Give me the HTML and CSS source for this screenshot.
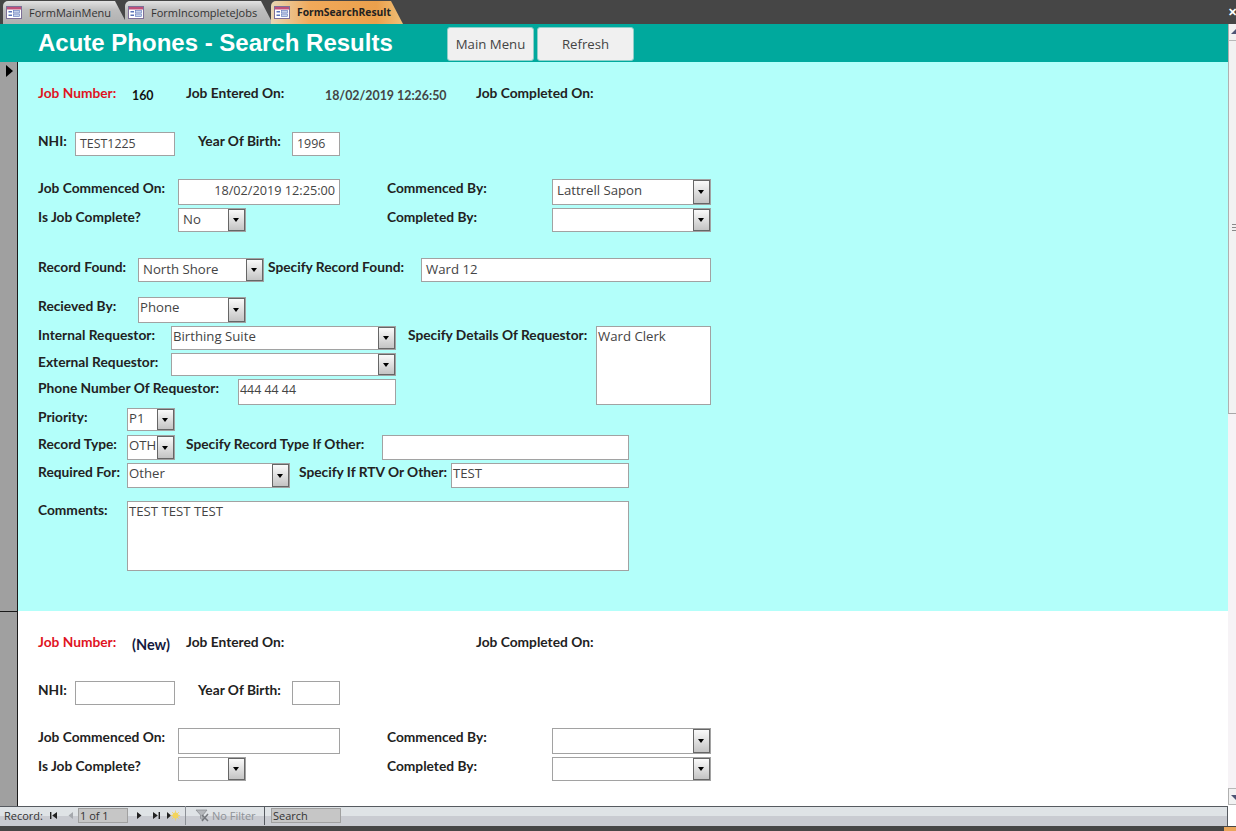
FILE: index.html
```html
<!DOCTYPE html>
<html lang="en">
<head>
    <meta charset="UTF-8">
    <title>Acute Phones - Search Results</title>
    <link rel="stylesheet" href="styles.css">
</head>
<body>

<svg class="defs" width="0" height="0">
    <symbol id="form-icon" viewBox="0 0 16 13">
        <rect x="0.5" y="0.5" width="15" height="12" fill="#fff" stroke="#7d6f98"/>
        <rect x="1" y="1" width="14" height="2.5" fill="#c0507a"/>
        <rect x="2.5" y="5" width="3.5" height="1.5" fill="#5a74b8"/>
        <rect x="2.5" y="8.5" width="3.5" height="1.5" fill="#5a74b8"/>
        <rect x="7.5" y="4.5" width="6" height="2.5" fill="#c6d2ea" stroke="#5a74b8" stroke-width="0.6"/>
        <rect x="7.5" y="8" width="6" height="2.5" fill="#c6d2ea" stroke="#5a74b8" stroke-width="0.6"/>
    </symbol>
</svg>

<nav class="tabs">
    <div class="tab tab-main"><svg class="tab-icon"><use href="#form-icon"/></svg>FormMainMenu</div>
    <div class="tab tab-jobs"><svg class="tab-icon"><use href="#form-icon"/></svg>FormIncompleteJobs</div>
    <div class="tab tab-search active"><svg class="tab-icon"><use href="#form-icon"/></svg>FormSearchResult</div>
    <div class="close">&#10005;</div>
</nav>

<div class="window">
    <div class="form">
        <header class="form-header">
            <h1>Acute Phones - Search Results</h1>
            <button class="btn btn-menu">Main Menu</button>
            <button class="btn btn-refresh">Refresh</button>
        </header>

        <div class="detail">
            <div class="selector">
                <div class="sel-cell sel-current"><span class="pointer"></span></div>
                <div class="sel-cell"></div>
            </div>
            <div class="records">

                <section class="record current">
                    <div class="row top-row">
                        <label class="lb w94 red">Job Number:</label>
                        <span class="val w54">160</span>
                        <label class="lb w139">Job Entered On:</label>
                        <span class="val date w151">18/02/2019 12:26:50</span>
                        <label class="lb">Job Completed On:</label>
                    </div>
                    <div class="row mt30">
                        <label class="lb w37">NHI:</label>
                        <div class="field num w100 h24">TEST1225</div>
                        <label class="lb w94 ml23">Year Of Birth:</label>
                        <div class="field num w48 h24">1996</div>
                    </div>
                    <div class="row mt23">
                        <label class="lb w140">Job Commenced On:</label>
                        <div class="field w162 h26 right">18/02/2019 12:25:00</div>
                        <label class="lb w165 ml47">Commenced By:</label>
                        <div class="combo w159 h26">Lattrell Sapon<span class="drop"></span></div>
                    </div>
                    <div class="row mt3">
                        <label class="lb w140">Is Job Complete?</label>
                        <div class="combo w68 h24">No<span class="drop"></span></div>
                        <label class="lb w165 ml141">Completed By:</label>
                        <div class="combo w159 h24"><span class="drop"></span></div>
                    </div>
                    <div class="row mt26">
                        <label class="lb w100">Record Found:</label>
                        <div class="combo w126 h24">North Shore<span class="drop"></span></div>
                        <label class="lb w153 ml4">Specify Record Found:</label>
                        <div class="field w290 h24">Ward 12</div>
                    </div>
                    <div class="row mt15">
                        <label class="lb w100">Recieved By:</label>
                        <div class="combo tight w108 h26">Phone<span class="drop"></span></div>
                    </div>

                    <div class="requestor mt3">
                        <div class="req-left">
                            <div class="row">
                                <label class="lb w133">Internal Requestor:</label>
                                <div class="combo tight w225 h24">Birthing Suite<span class="drop"></span></div>
                            </div>
                            <div class="row mt3">
                                <label class="lb w133">External Requestor:</label>
                                <div class="combo tight w225 h23"><span class="drop"></span></div>
                            </div>
                            <div class="row mt3">
                                <label class="lb w200">Phone Number Of Requestor:</label>
                                <div class="field tight num w158 h26">444 44 44</div>
                            </div>
                        </div>
                        <label class="lb w188 ml12">Specify Details Of Requestor:</label>
                        <div class="field tight w115 h79">Ward Clerk</div>
                    </div>

                    <div class="row mt3">
                        <label class="lb w89">Priority:</label>
                        <div class="combo tight w48 h23">P1<span class="drop"></span></div>
                    </div>
                    <div class="row mt4">
                        <label class="lb w89">Record Type:</label>
                        <div class="combo tight w48 h25">OTH<span class="drop"></span></div>
                        <label class="lb w196 ml11">Specify Record Type If Other:</label>
                        <div class="field w247 h25"></div>
                    </div>
                    <div class="row mt3">
                        <label class="lb w89">Required For:</label>
                        <div class="combo tight w163 h25">Other<span class="drop"></span></div>
                        <label class="lb w152 ml9">Specify If RTV Or Other:</label>
                        <div class="field tight w178 h25">TEST</div>
                    </div>
                    <div class="row mt13">
                        <label class="lb w89">Comments:</label>
                        <div class="field tight w502 h70">TEST TEST TEST</div>
                    </div>
                </section>

                <section class="record">
                    <div class="row top-row">
                        <label class="lb w94 red">Job Number:</label>
                        <span class="val w54 navy">(New)</span>
                        <label class="lb w139">Job Entered On:</label>
                        <span class="val date w151"></span>
                        <label class="lb">Job Completed On:</label>
                    </div>
                    <div class="row mt30">
                        <label class="lb w37">NHI:</label>
                        <div class="field w100 h24"></div>
                        <label class="lb w94 ml23">Year Of Birth:</label>
                        <div class="field w48 h24"></div>
                    </div>
                    <div class="row mt23">
                        <label class="lb w140">Job Commenced On:</label>
                        <div class="field w162 h26"></div>
                        <label class="lb w165 ml47">Commenced By:</label>
                        <div class="combo w159 h26"><span class="drop"></span></div>
                    </div>
                    <div class="row mt3">
                        <label class="lb w140">Is Job Complete?</label>
                        <div class="combo w68 h24"><span class="drop"></span></div>
                        <label class="lb w165 ml141">Completed By:</label>
                        <div class="combo w159 h24"><span class="drop"></span></div>
                    </div>
                </section>

            </div>
        </div>

        <footer class="navbar">
            <span class="nav-label">Record:</span>
            <svg class="nav-icon" viewBox="0 0 9 9"><path d="M1 1h1.400v7H1zM8 1v7L3.200 4.500z" fill="#222"/></svg>
            <svg class="nav-icon dim" viewBox="0 0 9 9"><path d="M7 1v7L2.500 4.500z" fill="#a5a8ad"/></svg>
            <span class="nav-box nav-pos">1 of 1</span>
            <svg class="nav-icon next" viewBox="0 0 9 9"><path d="M2 1v7l4.500-3.500z" fill="#222"/></svg>
            <svg class="nav-icon last" viewBox="0 0 9 9"><path d="M1 1v7l4.800-3.500zM6.600 1H8v7H6.600z" fill="#222"/></svg>
            <svg class="nav-icon new" viewBox="0 0 14 11"><path d="M1 2v7l4-3.500z" fill="#222"/><circle cx="9.500" cy="5.500" r="3" fill="#f2d45c"/><path d="M9.500 0.500v10M4.500 5.500h10M6 2l7 7M13 2l-7 7" stroke="#f2d45c" stroke-width="0.8"/></svg>
            <div class="nav-filter">
                <svg class="filter-icon" viewBox="0 0 15 13"><path d="M1 1h11L8 6v5L5.500 9.500V6z" fill="#b4b7bb" stroke="#85888d" stroke-width="0.7"/><path d="M7 6l6 6M13 5l-6 7" stroke="#75787d" stroke-width="1.500"/></svg>
                No Filter
            </div>
            <span class="nav-box nav-search">Search</span>
        </footer>
    </div>

    <aside class="scrollbar">
        <div class="sb-btn"><span class="sb-up"></span></div>
        <div class="sb-thumb"><span class="sb-grip"></span></div>
        <div class="sb-track"></div>
        <div class="sb-btn sb-btn-down"><span class="sb-down"></span></div>
        <div class="sb-end"></div>
    </aside>
</div>

<div class="statusbar"><span class="status-corner"></span></div>

</body>
</html>
```

FILE: styles.css
```css
* {
    box-sizing: border-box;
}
html, body {
    margin: 0;
    height: 100%;
    overflow: hidden;
}
body {
    width: 1236px;
    height: 831px;
    display: flex;
    flex-direction: column;
    background: #464646;
    font-family: "Open Sans", "Liberation Sans", sans-serif;
    color: #444;
}
.defs {
    position: absolute;
}

/* tabs */
.tabs {
    height: 24px;
    flex: none;
    display: flex;
    align-items: flex-end;
    padding-left: 3px;
    background: #464646;
}
.tab {
    height: 23px;
    display: flex;
    align-items: center;
    padding: 0 0 1px 3px;
    font-size: 11px;
    color: #333;
    background: linear-gradient(#e2e2e2, #bdbdbd 40%, #b0b0b0);
    border-radius: 5px 4px 0 0;
    clip-path: polygon(0 0, calc(100% - 12px) 0, 100% 100%, 0 100%);
}
.tab-main { width: 124px; }
.tab-jobs { width: 148px; margin-left: -2px; }
.tab-search {
    width: 132px;
    margin-left: -2px;
    font-size: 10.3px;
    font-weight: 700;
    color: #222;
    background: linear-gradient(90deg, #e8d6b4, #f0a95a 30%, #eba04c 80%, #f0c078);
}
.tab-icon {
    width: 16px;
    height: 13px;
    margin-right: 7px;
}
.close {
    margin-left: auto;
    align-self: center;
    width: 8px;
    overflow: hidden;
    font-size: 11px;
    line-height: 24px;
    font-weight: 700;
    color: #fff;
}

.window {
    flex: 1;
    display: flex;
    min-height: 0;
}
.form {
    width: 1228px;
    display: flex;
    flex-direction: column;
}

/* header */
.form-header {
    height: 38px;
    flex: none;
    display: flex;
    padding-left: 38px;
    padding-top: 3px;
    background: #00a99d;
}
.form-header h1 {
    width: 409px;
    margin: 1px 0 0;
    font-family: "Liberation Sans", Arial, sans-serif;
    font-size: 24px;
    line-height: 30px;
    font-weight: 700;
    color: #fff;
}
.btn {
    height: 34px;
    padding: 0;
    font-family: inherit;
    font-size: 13.2px;
    color: #444;
    background: #f0f0f0;
    border: 1px solid #8fcfc9;
    border-radius: 3px;
}
.btn-menu {
    width: 87px;
}
.btn-refresh {
    width: 97px;
    margin-left: 3px;
}

/* detail area */
.detail {
    flex: 1;
    display: flex;
    min-height: 0;
    overflow: hidden;
    background: #fff;
}
.selector {
    width: 18px;
    flex: none;
    background: #a0a0a0;
    border-right: 1px solid #1a1a1a;
}
.sel-current {
    height: 550px;
    padding: 3px 0 0 6px;
    border-bottom: 1px solid #1a1a1a;
}
.pointer {
    display: block;
    width: 0;
    height: 0;
    border-left: 7px solid #000;
    border-top: 6px solid transparent;
    border-bottom: 6px solid transparent;
}
.records {
    flex: 1;
    min-width: 0;
}
.record {
    height: 549px;
    padding: 22px 0 0 20px;
    background: #fff;
}
.record.current {
    background: #b3fffa;
}

/* rows */
.row {
    display: flex;
    align-items: flex-start;
}
.top-row {
    height: 18px;
}
.requestor {
    display: flex;
    align-items: flex-start;
}
.lb {
    flex: none;
    font-family: Lato, "Liberation Sans", sans-serif;
    font-size: 13.75px;
    line-height: 18px;
    font-weight: 700;
    color: #222;
    white-space: nowrap;
}
.lb.red {
    color: #e0141e;
}
.val {
    flex: none;
    padding-top: 3px;
    font-family: Lato, "Liberation Sans", sans-serif;
    font-size: 12.4px;
    line-height: 18px;
    font-weight: 700;
    color: #111;
}
.val.date {
    color: #444;
}
.val.navy {
    font-size: 14.5px;
    color: #141a40;
}
.field, .combo {
    position: relative;
    flex: none;
    padding-left: 4px;
    font-size: 13.2px;
    line-height: 21px;
    color: #444;
    background: #fff;
    border: 1px solid #a2a2a2;
    white-space: nowrap;
    overflow: hidden;
}
.tight {
    padding-left: 1px;
    line-height: 19px;
}
.num {
    font-size: 12.4px;
}
.right {
    padding: 0 4px 0 0;
    font-size: 12.7px;
    text-align: right;
}
.drop {
    position: absolute;
    top: 0;
    right: 0;
    bottom: 0;
    width: 17px;
    background: linear-gradient(#fafafa, #c4c4c4);
    border: 1px solid #666;
}
.drop::after {
    content: "";
    position: absolute;
    left: 4px;
    top: 50%;
    margin-top: -2px;
    border-top: 4px solid #000;
    border-left: 3px solid transparent;
    border-right: 3px solid transparent;
}

/* widths */
.w37 { width: 37px; }
.w48 { width: 48px; }
.w54 { width: 54px; }
.w68 { width: 68px; }
.w89 { width: 89px; }
.w94 { width: 94px; }
.w100 { width: 100px; }
.w108 { width: 108px; }
.w115 { width: 115px; }
.w126 { width: 126px; }
.w133 { width: 133px; }
.w139 { width: 139px; }
.w140 { width: 140px; }
.w151 { width: 151px; }
.w152 { width: 152px; }
.w153 { width: 153px; }
.w158 { width: 158px; }
.w159 { width: 159px; }
.w162 { width: 162px; }
.w163 { width: 163px; }
.w165 { width: 165px; }
.w178 { width: 178px; }
.w188 { width: 188px; }
.w196 { width: 196px; }
.w200 { width: 200px; }
.w225 { width: 225px; }
.w247 { width: 247px; }
.w290 { width: 290px; }
.w502 { width: 502px; }

/* heights */
.h23 { height: 23px; }
.h24 { height: 24px; }
.h25 { height: 25px; }
.h26 { height: 26px; }
.h70 { height: 70px; }
.h79 { height: 79px; }

/* spacing */
.ml4 { margin-left: 4px; }
.ml9 { margin-left: 9px; }
.ml11 { margin-left: 11px; }
.ml12 { margin-left: 12px; }
.ml23 { margin-left: 23px; }
.ml47 { margin-left: 47px; }
.ml141 { margin-left: 141px; }
.mt3 { margin-top: 3px; }
.mt4 { margin-top: 4px; }
.mt13 { margin-top: 13px; }
.mt15 { margin-top: 15px; }
.mt23 { margin-top: 23px; }
.mt26 { margin-top: 26px; }
.mt30 { margin-top: 30px; }

/* record navigation */
.navbar {
    height: 20px;
    flex: none;
    display: flex;
    align-items: center;
    padding: 0 0 2px 4px;
    font-size: 11px;
    color: #333;
    background: linear-gradient(#dfe3e6 50%, #c9cbd1 50%);
    border-top: 1px solid #565a60;
    border-right: 1px solid #565a60;
}
.nav-label {
    width: 42px;
}
.nav-icon {
    width: 9px;
    height: 9px;
    margin-left: 3px;
}
.nav-icon.dim {
    margin-left: 8px;
}
.nav-icon.next {
    margin-left: 7px;
}
.nav-icon.last {
    margin-left: 8px;
}
.nav-icon.new {
    width: 14px;
    height: 11px;
    margin-left: 5px;
}
.nav-box {
    height: 15px;
    padding-left: 1px;
    line-height: 13px;
    background: #c6c6c6;
    border: 1px solid #a0a0a0;
}
.nav-pos {
    width: 50px;
    margin-left: 3px;
}
.nav-filter {
    width: 80px;
    height: 19px;
    margin-left: 5px;
    display: flex;
    align-items: center;
    color: #8e9296;
    border-left: 1px solid #8c9096;
    border-right: 1px solid #565a60;
    padding-left: 9px;
}
.filter-icon {
    width: 15px;
    height: 13px;
    margin-right: 2px;
}
.nav-search {
    width: 70px;
    margin-left: 6px;
    color: #333;
}

/* scrollbar */
.scrollbar {
    width: 8px;
    flex: none;
    display: flex;
    flex-direction: column;
    background: #fff;
}
.sb-btn {
    height: 17px;
    flex: none;
    background: #f2f2f2;
    border-left: 1px solid #b0b0b0;
    border-bottom: 1px solid #b8b8b8;
    padding: 5px 0 0 2px;
}
.sb-btn-down {
    border-top: 1px solid #b8b8b8;
    padding-top: 6px;
}
.sb-up {
    display: block;
    width: 0;
    border-bottom: 5px solid #4d5474;
    border-left: 5px solid transparent;
}
.sb-down {
    display: block;
    width: 0;
    border-top: 5px solid #4d5474;
    border-left: 5px solid transparent;
}
.sb-thumb {
    height: 373px;
    flex: none;
    position: relative;
    background: #f2f2f2;
    border-left: 1px solid #b0b0b0;
    border-bottom: 1px solid #a8a8a8;
}
.sb-grip {
    position: absolute;
    left: 3px;
    right: 0;
    top: 183px;
    height: 7px;
    background: repeating-linear-gradient(#8a8a8a 0 1px, transparent 1px 3px);
}
.sb-track {
    flex: 1;
    background: #f6f3f6;
}
.sb-end {
    height: 21px;
    flex: none;
}

/* bottom strip */
.statusbar {
    height: 5px;
    flex: none;
    position: relative;
    background: #464646;
}
.status-corner {
    position: absolute;
    right: 0;
    bottom: 0;
    width: 12px;
    height: 4px;
    background: #eaa55a;
}
```
